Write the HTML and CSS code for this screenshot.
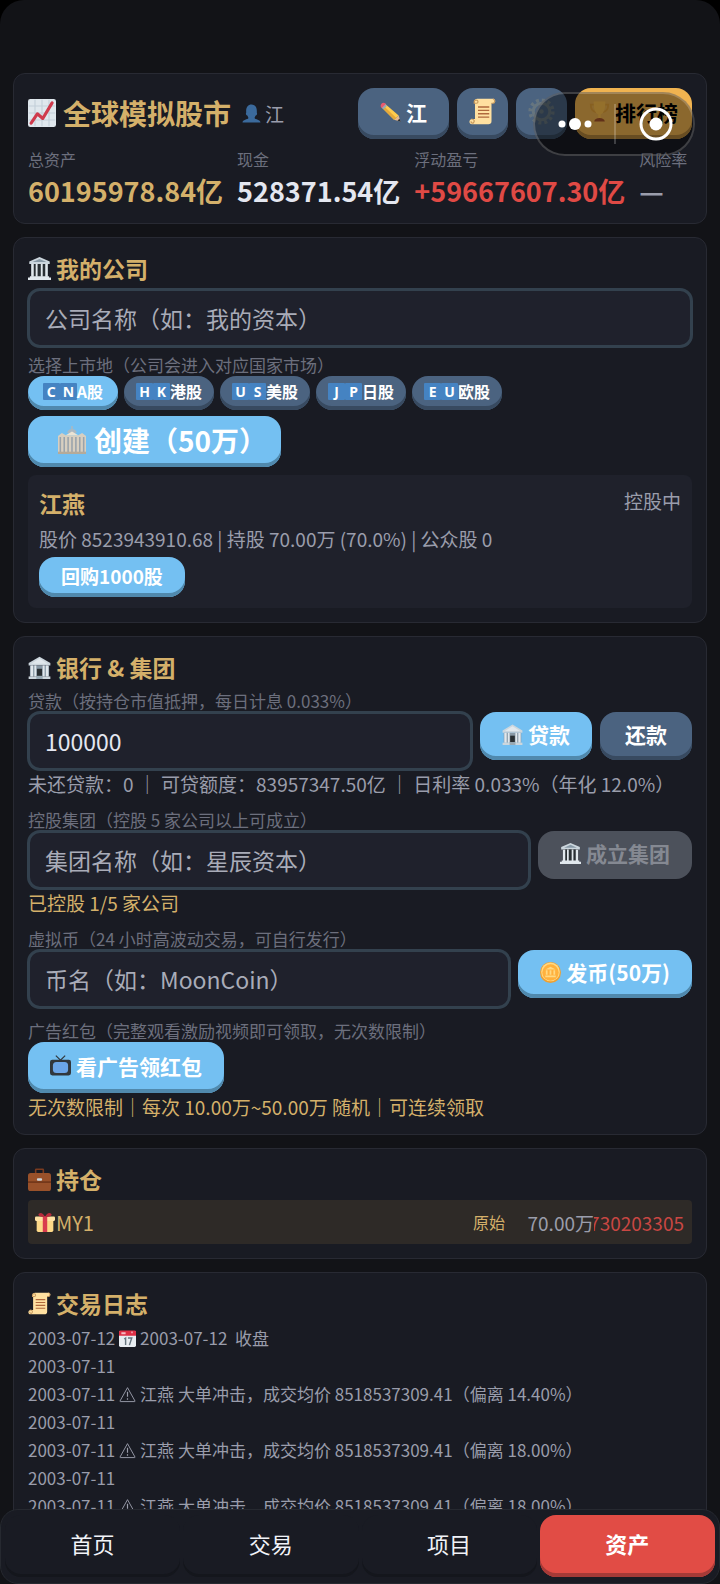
FILE: index.html
```
<!DOCTYPE html>
<html lang="zh-CN">
<head>
  <meta charset="UTF-8">
  <meta name="viewport" content="width=device-width, initial-scale=1">
  <title>全球模拟股市</title>
  <link rel="stylesheet" href="styles.css">
</head>
<body>

  <!-- icon set -->
  <svg class="sprite" aria-hidden="true">
    <symbol id="i-chart" viewBox="0 0 36 36">
      <rect width="36" height="36" rx="3" fill="#dfe7ed"/>
      <path d="M9 1v34M18 1v34M27 1v34M1 9h34M1 18h34M1 27h34" stroke="#c3d0d9" stroke-width="1.5"/>
      <path d="M4 31l8-12 7 6L31 5" fill="none" stroke="#cf3a4c" stroke-width="4" stroke-linecap="round" stroke-linejoin="round"/>
    </symbol>
    <symbol id="i-user" viewBox="0 0 36 36">
      <path d="M24 26.800c0-2 1-3 2-4.800 3-1 3-4 2-6C29 7 25 1 18 1S7 7 8 16c-1 2-1 5 2 6 1 1.800 2 2.800 2 4.800C11 29 1 29 1 35h34c0-6-10-6-11-8.200z" fill="#3b6a9c"/>
    </symbol>
    <symbol id="i-pencil" viewBox="0 0 36 36">
      <path d="M35 35l-3-10-8 7z" fill="#e8b88f"/>
      <path d="M35.500 35.500l-2-5-3.500 3z" fill="#292f33"/>
      <path d="M9 5l23 20-8 7L3 11z" fill="#ffcc4d"/>
      <path d="M6 8l22 21-4 3L3 11z" fill="#e5a93b"/>
      <path d="M9 5l3 3-6 6-3-3z" fill="#99aab5"/>
      <path d="M2 11C-1 7 4 0 9 4l1 1-7 7z" fill="#ea596e"/>
    </symbol>
    <symbol id="i-scroll" viewBox="0 0 36 36">
      <path d="M7 5c0-3 2-4 4-4h21c4 0 4 6 0 6h-2v24c0 3-2 4-4 4H4c-5 0-4-7 0-7h4V7z" fill="#ffe0a0"/>
      <path d="M7 5c0-3 5-3 5 0 0 2-2 2-2 2H7zM3 28c4 0 5 3 3 5-1 1-4 0-3-2M30 7h2c3 0 3-5 0-6" fill="none" stroke="#c99b5e" stroke-width="1.600"/>
      <path d="M12 12h15M12 16.500h15M12 21h15M12 25.500h15" stroke="#b0683c" stroke-width="1.800"/>
    </symbol>
    <symbol id="i-gear" viewBox="0 0 36 36">
      <circle cx="18" cy="18" r="15" fill="none" stroke="#66757f" stroke-width="5" stroke-dasharray="4 3.850"/>
      <circle cx="18" cy="18" r="11" fill="none" stroke="#66757f" stroke-width="4"/>
      <circle cx="18" cy="18" r="3" fill="#66757f"/>
    </symbol>
    <symbol id="i-trophy" viewBox="0 0 36 36">
      <path d="M9 6H3c0 8 3 12 9 13M27 6h6c0 8-3 12-9 13" fill="none" stroke="#e8a53a" stroke-width="3"/>
      <path d="M8 1h20c0 12-2 20-8 22v7h-4v-7C10 21 8 13 8 1z" fill="#ffc24d"/>
      <path d="M9 35c0-4 4-6 9-6s9 2 9 6z" fill="#a8542a"/>
    </symbol>
    <symbol id="i-classic" viewBox="0 0 36 36">
      <path d="M18 0L2 7v4h32V7z" fill="#ccd6dd"/>
      <path d="M18 3L7 8h22z" fill="#8899a6"/>
      <path d="M5 11h26v20H5z" fill="#292f33"/>
      <path d="M5 11h4v20H5zM12 11h3v20h-3zM20 11h3v20h-3zM27 11h4v20h-4z" fill="#e1e8ed"/>
      <path d="M3 30h30v2H3zM0 32h36v4H0z" fill="#e1e8ed"/>
    </symbol>
    <symbol id="i-bank" viewBox="0 0 36 36">
      <path d="M18 1L1 11v4h34v-4z" fill="#ccd6dd"/>
      <path d="M18 4L5 12h26z" fill="#e1e8ed"/>
      <path d="M3 15h30v17H3z" fill="#8899a6"/>
      <path d="M4 15h4v17H4zM10 15h3v17h-3zM23 15h3v17h-3zM28 15h4v17h-4z" fill="#e1e8ed"/>
      <path d="M14 20h8v12h-8z" fill="#292f33"/>
      <path d="M1 32h34v4H1z" fill="#ccd6dd"/>
      <path d="M13 31h10v5H13z" fill="#99aab5"/>
    </symbol>
    <symbol id="i-hall" viewBox="0 0 36 36">
      <path d="M17 0h2v4h-2zM12 9c0-7 12-7 12 0z" fill="#aab8c2"/>
      <path d="M0 13l5-4 5 3h16l5-3 5 4v21H0z" fill="#d8cfc0"/>
      <path d="M3 14v20M8 14v20M13 14v20M18 14v20M23 14v20M28 14v20M33 14v20" stroke="#9aa3ab" stroke-width="2"/>
      <path d="M10 12l8-5 8 5z" fill="#ece3d3"/>
      <path d="M0 33h36v3H0z" fill="#b5aa99"/>
    </symbol>
    <symbol id="i-coin" viewBox="0 0 36 36">
      <circle cx="18" cy="18" r="18" fill="#f0a030"/>
      <circle cx="18" cy="17" r="16" fill="#ffd983"/>
      <circle cx="18" cy="18" r="14" fill="#ffb13d"/>
      <path d="M18 8l-9 5h18zM10 14h3v8h-3zM16.500 14h3v8h-3zM23 14h3v8h-3zM9 23h18v3H9z" fill="#ffd983"/>
    </symbol>
    <symbol id="i-tv" viewBox="0 0 36 36">
      <path d="M10 1l8 8 8-8" fill="none" stroke="#31373d" stroke-width="2"/>
      <rect y="8" width="36" height="27" rx="4" fill="#31373d"/>
      <rect x="5" y="12" width="26" height="19" rx="6" fill="#6ba5e8"/>
    </symbol>
    <symbol id="i-case" viewBox="0 0 36 36">
      <path d="M12 8V3q0-1 1-1h10q1 0 1 1v5" fill="none" stroke="#7b3b1f" stroke-width="2.500"/>
      <rect y="8" width="36" height="28" rx="4" fill="#99512a"/>
      <path d="M0 22h36" stroke="#662f15" stroke-width="2"/>
      <rect x="14" y="16" width="8" height="4" rx="1.500" fill="#ccd6dd"/>
    </symbol>
    <symbol id="i-gift" viewBox="0 0 36 36">
      <path d="M3 14h30v19q0 3-3 3H6q-3 0-3-3z" fill="#fdd888"/>
      <rect y="8" width="36" height="8" rx="2" fill="#ffe2a3"/>
      <path d="M14 8h8v28h-8z" fill="#d93b4e"/>
      <path d="M18 9C9 9 4 6 7 3s8-1 11 6c3-7 8-9 11-6s-2 6-11 6z" fill="#b82b3c"/>
    </symbol>
    <symbol id="i-calendar" viewBox="0 0 36 36">
      <rect y="2" width="36" height="34" rx="3" fill="#e8edf1"/>
      <path d="M0 12V4q0-3 3-3h30q3 0 3 3v8z" fill="#dd2e44"/>
      <path d="M5 7h9M26 5h3" stroke="#f6b9c1" stroke-width="4"/>
      <path d="M11 19l3-2v15M19 17h8l-5 15" fill="none" stroke="#66757f" stroke-width="3"/>
    </symbol>
    <symbol id="i-warn" viewBox="0 0 36 36">
      <path d="M18 3.500L34 32q0 1-1 1H3q-1 0-1-1z" fill="none" stroke="currentColor" stroke-width="2" stroke-linejoin="round"/>
      <path d="M18 12v11M18 26v3" stroke="currentColor" stroke-width="2.500"/>
    </symbol>
  </svg>

  <main class="page">

    <section class="card">
      <div class="topbar">
        <h1><svg class="icon"><use href="#i-chart"/></svg>全球模拟股市</h1>
        <span class="player"><svg class="icon"><use href="#i-user"/></svg>江</span>
        <div class="actions">
          <button class="btn dark tall"><svg class="icon"><use href="#i-pencil"/></svg>江</button>
          <button class="btn dark tall square" aria-label="日志"><svg class="icon"><use href="#i-scroll"/></svg></button>
          <button class="btn dark tall square" aria-label="设置"><svg class="icon"><use href="#i-gear"/></svg></button>
          <button class="btn gold tall"><svg class="icon"><use href="#i-trophy"/></svg>排行榜</button>
        </div>
      </div>
      <div class="stats">
        <div><div class="stat-label">总资产</div><div class="stat-value yellow">60195978.84亿</div></div>
        <div><div class="stat-label">现金</div><div class="stat-value">528371.54亿</div></div>
        <div><div class="stat-label">浮动盈亏</div><div class="stat-value red">+59667607.30亿</div></div>
        <div><div class="stat-label">风险率</div><div class="stat-value muted">—</div></div>
      </div>
    </section>

    <section class="card">
      <h2><svg class="icon"><use href="#i-classic"/></svg>我的公司</h2>
      <div class="row">
        <input type="text" aria-label="公司名称" placeholder="公司名称（如：我的资本）">
      </div>
      <div class="hint spaced">选择上市地（公司会进入对应国家市场）</div>
      <div class="markets">
        <button class="btn chip"><span class="flag"><i>C</i><i>N</i></span>A股</button>
        <button class="btn chip dark"><span class="flag"><i>H</i><i>K</i></span>港股</button>
        <button class="btn chip dark"><span class="flag"><i>U</i><i>S</i></span>美股</button>
        <button class="btn chip dark"><span class="flag"><i>J</i><i>P</i></span>日股</button>
        <button class="btn chip dark"><span class="flag"><i>E</i><i>U</i></span>欧股</button>
      </div>
      <button class="btn create"><svg class="icon"><use href="#i-hall"/></svg>创建（50万）</button>
      <div class="company">
        <div class="company-head">
          <h3>江燕</h3>
          <span>控股中</span>
        </div>
        <p>股价 8523943910.68 | 持股 70.00万 (70.0%) | 公众股 0</p>
        <button class="btn small">回购1000股</button>
      </div>
    </section>

    <section class="card">
      <h2><svg class="icon"><use href="#i-bank"/></svg>银行 &amp; 集团</h2>

      <div class="block">
        <label class="hint" for="loan">贷款（按持仓市值抵押，每日计息 0.033%）</label>
        <div class="row">
          <input type="text" id="loan" value="100000">
          <button class="btn"><svg class="icon"><use href="#i-bank"/></svg>贷款</button>
          <button class="btn dark repay">还款</button>
        </div>
        <div class="note">未还贷款：0 ｜ 可贷额度：83957347.50亿 ｜ 日利率 0.033%（年化 12.0%）</div>
      </div>

      <div class="block">
        <label class="hint" for="group">控股集团（控股 5 家公司以上可成立）</label>
        <div class="row">
          <input type="text" id="group" placeholder="集团名称（如：星辰资本）">
          <button class="btn" disabled><svg class="icon"><use href="#i-classic"/></svg>成立集团</button>
        </div>
        <div class="note yellow">已控股 1/5 家公司</div>
      </div>

      <div class="block">
        <label class="hint" for="coin">虚拟币（24 小时高波动交易，可自行发行）</label>
        <div class="row">
          <input type="text" id="coin" placeholder="币名（如：MoonCoin）">
          <button class="btn"><svg class="icon"><use href="#i-coin"/></svg>发币(50万)</button>
        </div>
      </div>

      <div class="block">
        <div class="hint">广告红包（完整观看激励视频即可领取，无次数限制）</div>
        <button class="btn tall"><svg class="icon"><use href="#i-tv"/></svg>看广告领红包</button>
        <div class="note yellow">无次数限制｜每次 10.00万~50.00万 随机｜可连续领取</div>
      </div>
    </section>

    <section class="card">
      <h2><svg class="icon"><use href="#i-case"/></svg>持仓</h2>
      <div class="holding">
        <span class="code"><svg class="icon"><use href="#i-gift"/></svg>MY1</span>
        <span class="tag">原始</span>
        <span class="amount">70.00万</span>
        <span class="profit">730203305</span>
      </div>
    </section>

    <section class="card">
      <h2><svg class="icon"><use href="#i-scroll"/></svg>交易日志</h2>
      <ul class="log">
        <li>2003-07-12 <svg class="icon"><use href="#i-calendar"/></svg>2003-07-12&nbsp; 收盘</li>
        <li>2003-07-11</li>
        <li>2003-07-11 <svg class="icon"><use href="#i-warn"/></svg>江燕 大单冲击，成交均价 8518537309.41（偏离 14.40%）</li>
        <li>2003-07-11</li>
        <li>2003-07-11 <svg class="icon"><use href="#i-warn"/></svg>江燕 大单冲击，成交均价 8518537309.41（偏离 18.00%）</li>
        <li>2003-07-11</li>
        <li>2003-07-11 <svg class="icon"><use href="#i-warn"/></svg>江燕 大单冲击，成交均价 8518537309.41（偏离 18.00%）</li>
      </ul>
    </section>

  </main>

  <!-- floating capsule: more / close -->
  <div class="capsule">
    <button aria-label="更多">
      <svg width="36" height="14" viewBox="0 0 36 14" fill="#fff"><circle cx="5" cy="7" r="3.500"/><circle cx="18" cy="7" r="6"/><circle cx="31" cy="7" r="3.500"/></svg>
    </button>
    <button aria-label="关闭">
      <svg width="34" height="34" viewBox="0 0 34 34"><circle cx="17" cy="17" r="15" fill="none" stroke="#fff" stroke-width="3"/><circle cx="17" cy="17" r="6.500" fill="#fff"/></svg>
    </button>
  </div>

  <nav class="tabs">
    <button>首页</button>
    <button>交易</button>
    <button>项目</button>
    <button class="active">资产</button>
  </nav>

</body>
</html>
```
FILE: styles.css
```
* {
  box-sizing: border-box;
}

html {
  background: #000;
}

body {
  margin: 0;
  min-height: 100vh;
  padding: 73px 13px 40px;
  font-family: "Noto Sans CJK SC", sans-serif;
  font-size: 19px;
  color: #e4e7f0;
  background: #121317;
  border-radius: 24px 24px 0 0;
}

h1, h2, h3, p, ul {
  margin: 0;
  padding: 0;
}

button, input {
  font-family: inherit;
}

.sprite {
  position: absolute;
  width: 0;
  height: 0;
}

.icon {
  width: 1em;
  height: 1em;
  flex: none;
}

.page {
  display: flex;
  flex-direction: column;
  gap: 13px;
}

.card {
  padding: 14px;
  background: #191b23;
  border: 1px solid #282a33;
  border-radius: 12px;
}

.yellow { color: #d4b06a; }
.red { color: #e04a45; }
.muted { color: #9a9dab; }

/* header */
.topbar {
  display: flex;
  align-items: center;
}

h1 {
  display: flex;
  align-items: center;
  gap: 7px;
  padding-bottom: 2px;
  font-size: 28px;
  line-height: 40px;
  color: #d4b06a;
  white-space: nowrap;
}

.player {
  display: flex;
  align-items: center;
  gap: 4px;
  margin-left: 11px;
  font-size: 19px;
  color: #9a9dab;
}

.actions {
  display: flex;
  gap: 8px;
  margin-left: auto;
}

.stats {
  display: flex;
  gap: 14px;
  margin-top: 9px;
  white-space: nowrap;
}

.stat-label {
  font-size: 16px;
  line-height: 23px;
  color: #6c6f7d;
}

.stat-value {
  margin-bottom: -2px;
  font-size: 27px;
  line-height: 40px;
  font-weight: bold;
}

/* buttons */
.btn {
  display: inline-flex;
  align-items: center;
  justify-content: center;
  gap: 5px;
  height: 48px;
  padding: 0 22px 4px;
  font-size: 21px;
  font-weight: bold;
  color: #fff;
  white-space: nowrap;
  background: #74c0f2;
  border: none;
  border-radius: 16px;
  box-shadow: inset 0 -4px 0 #5089ad;
  cursor: pointer;
}

.btn.dark {
  background: #4b6380;
  box-shadow: inset 0 -4px 0 #384a60;
}

.btn.gold {
  padding: 0 14px 4px;
  color: #000;
  background: #f0b350;
  box-shadow: inset 0 -4px 0 #b3853b;
}

.btn:disabled {
  color: #858992;
  background: #4c515b;
  box-shadow: none;
}

.btn.tall {
  height: 51px;
}

.btn.square {
  width: 51px;
  padding: 0 0 4px;
  font-size: 27px;
}

.btn.repay {
  padding: 0 25px 4px;
}

.btn.create {
  display: flex;
  gap: 8px;
  height: 51px;
  margin-top: 6px;
  padding: 0 14px 4px 30px;
  font-size: 28px;
}

.btn.small {
  height: 40px;
  font-size: 19px;
}

.btn.chip {
  gap: 0;
  min-width: 90px;
  height: 34px;
  padding: 0 12px 4px;
  font-size: 16px;
}

/* company */
h2 {
  display: flex;
  align-items: center;
  gap: 5px;
  margin-bottom: 5px;
  font-size: 23px;
  line-height: 32px;
  color: #d4b06a;
}

.row {
  display: flex;
  align-items: flex-start;
  gap: 8px;
}

input {
  flex: 1;
  min-width: 0;
  height: 58px;
  padding: 0 15px 1px;
  font-size: 23px;
  color: #e4e7f0;
  background: #1f212c;
  border: 2px solid #33414e;
  border-radius: 12px;
  box-shadow: 0 0 0 1px #33414e;
  outline: none;
}

input::placeholder {
  color: #a9acb8;
  opacity: 1;
}

.hint {
  display: block;
  font-size: 17px;
  line-height: 23px;
  color: #6c6f7d;
}

.hint.spaced {
  margin-top: 6px;
}

.markets {
  display: flex;
  gap: 6px;
}

.flag {
  display: flex;
}

.flag i {
  width: 17px;
  font-family: "Noto Sans", sans-serif;
  font-size: 14px;
  line-height: 17px;
  font-style: normal;
  text-align: center;
  background: #4583c2;
  border-radius: 1px;
}

.company {
  margin-top: 8px;
  padding: 11px;
  background: #1f212b;
  border-radius: 8px;
}

.company-head {
  display: flex;
  justify-content: space-between;
  line-height: 29px;
  color: #9a9dab;
}

h3 {
  font-size: 23px;
  line-height: 34px;
  color: #d4b06a;
}

.company p {
  line-height: 37px;
  color: #9a9dab;
}

/* bank */
.block + .block {
  margin-top: 11px;
}

h2 + .block {
  margin-top: 6px;
}

.block .btn {
  vertical-align: top;
}

.note {
  font-size: 19px;
  line-height: 27px;
  color: #9a9dab;
}

.note.yellow {
  color: #d4b06a;
}

/* holdings */
.holding {
  display: flex;
  align-items: center;
  height: 44px;
  padding: 0 8px 0 7px;
  background: #2e2a27;
  border-radius: 4px;
}

.holding .code {
  display: flex;
  align-items: center;
  flex: 1;
  gap: 1px;
  font-size: 20px;
  color: #d4b06a;
}

.holding .tag {
  font-size: 16px;
  color: #d4b06a;
}

.holding .amount {
  width: 89px;
  text-align: right;
  color: #9a9dab;
}

.holding .profit {
  display: flex;
  justify-content: flex-end;
  width: 90px;
  overflow: hidden;
  color: #c94743;
}

/* log */
.log {
  list-style: none;
  font-size: 17px;
  line-height: 28px;
  color: #9a9dab;
}

.log .icon {
  margin-right: 4px;
  vertical-align: -2px;
}

/* floating capsule */
.capsule {
  position: fixed;
  top: 92px;
  right: 25px;
  display: flex;
  width: 162px;
  height: 64px;
  background: rgba(0, 0, 0, 0.42);
  border: 2px solid rgba(255, 255, 255, 0.2);
  border-radius: 32px;
}

.capsule button {
  display: flex;
  flex: 1;
  align-items: center;
  justify-content: center;
  padding: 0;
  background: none;
  border: none;
}

.capsule button + button::before {
  content: "";
  width: 2px;
  height: 40px;
  margin-right: 23px;
  background: rgba(255, 255, 255, 0.2);
}

.capsule button + button {
  justify-content: flex-start;
}

/* bottom tabs */
.tabs {
  position: fixed;
  right: 0;
  bottom: 0;
  left: 0;
  display: flex;
  gap: 3px;
  height: 75px;
  padding: 5px 4px;
  background: #191b23;
  border: 1px solid #262930;
  border-radius: 18px;
}

.tabs button {
  flex: 1;
  height: 62px;
  padding: 0 0 6px;
  font-size: 22px;
  color: #f1f3f8;
  background: #191b23;
  border: none;
  border-radius: 16px;
  box-shadow: inset 0 -3px 0 #14161c;
}

.tabs .active {
  font-weight: bold;
  color: #fff;
  background: #e14c45;
  box-shadow: inset 0 -4px 0 #a53a37;
}
```
